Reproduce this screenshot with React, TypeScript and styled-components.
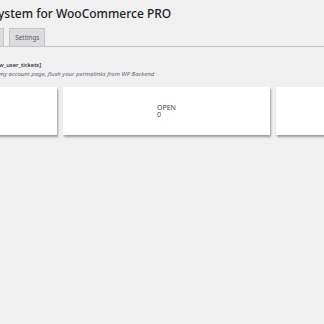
import React from 'react';
import styled, { createGlobalStyle } from 'styled-components';

const GlobalStyle = createGlobalStyle`
  html, body {
    margin: 0;
    padding: 0;
    background: #f0f0f1;
    font-family: "Noto Sans", "Open Sans", sans-serif;
    color: #1d2327;
    overflow: hidden;
  }
`;

const Wrap = styled.div`
  width: 324px;
  height: 324px;
  overflow: hidden;
`;

const Title = styled.h1`
  margin: 0;
  padding: 5px 0 0;
  margin-left: -2px;
  font-size: 12px;
  font-weight: 500;
  line-height: 18px;
  white-space: nowrap;
`;

const TabBar = styled.nav`
  display: flex;
  align-items: flex-end;
  gap: 5px;
  margin-top: 5px;
  border-bottom: 1px solid #c3c4c7;
  margin-left: -28px;
  height: 18px;
`;

const Tab = styled.span`
  box-sizing: border-box;
  height: 18px;
  padding: 0 5px;
  border: 1px solid #c3c4c7;
  border-bottom: none;
  background: #dcdcde;
  color: #50575e;
  font-size: 6.3px;
  line-height: 17px;
  white-space: nowrap;
`;

const Info = styled.div`
  margin-top: 14px;
  font-size: 6px;
  line-height: 9px;
  white-space: nowrap;
`;

const Shortcode = styled.div`
  margin-left: -1px;
  font-size: 5.8px;
  font-weight: 500;
`;

const Note = styled.p`
  margin: 0;
  font-style: italic;
  color: #646970;
  margin-left: -1px;
`;

const Cards = styled.div`
  display: grid;
  grid-template-columns: repeat(3, 207px);
  gap: 6px;
  margin-top: 8px;
  margin-left: -150px;
`;

const Card = styled.div`
  height: 48px;
  background: #fff;
  box-shadow: 1px 2px 2px rgba(0, 0, 0, 0.35);
  display: flex;
  flex-direction: column;
  justify-content: center;
  padding-left: 94px;
  font-size: 7px;
  line-height: 7.5px;
  color: #3c434a;
`;

export default function App() {
  return (
    <Wrap>
      <GlobalStyle />
      <Title>ystem for WooCommerce PRO</Title>
      <TabBar>
        <Tab>Tickets</Tab>
        <Tab>Settings</Tab>
      </TabBar>
      <Info>
        <Shortcode>w_user_tickets]</Shortcode>
        <Note>my account page, flush your permalinks from WP Backend</Note>
      </Info>
      <Cards>
        <Card />
        <Card>
          <span>OPEN</span>
          <span>0</span>
        </Card>
        <Card />
      </Cards>
    </Wrap>
  );
}
